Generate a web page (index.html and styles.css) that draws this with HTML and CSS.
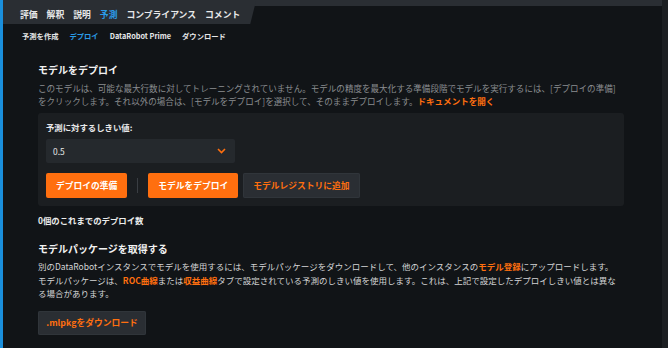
FILE: index.html
```html
<!DOCTYPE html>
<html lang="ja">
<head>
<meta charset="utf-8">
<link rel="stylesheet" href="styles.css">
</head>
<body>
<div class="app">
  <div class="rail"></div>
  <div class="main">
    <header class="topbar">
      <nav class="tabs">
        <span class="tab">評価</span>
        <span class="tab">解釈</span>
        <span class="tab">説明</span>
        <span class="tab active">予測</span>
        <span class="tab">コンプライアンス</span>
        <span class="tab">コメント</span>
      </nav>
    </header>
    <nav class="subtabs">
      <span class="subtab">予測を作成</span>
      <span class="subtab active">デプロイ</span>
      <span class="subtab">DataRobot Prime</span>
      <span class="subtab">ダウンロード</span>
    </nav>
    <section class="content">
      <h2 class="title">モデルをデプロイ</h2>
      <p class="desc">このモデルは、可能な最大行数に対してトレーニングされていません。モデルの精度を最大化する準備段階でモデルを実行するには、[デプロイの準備]<br>をクリックします。それ以外の場合は、[モデルをデプロイ]を選択して、そのままデプロイします。<a class="link">ドキュメントを開く</a></p>
      <div class="panel">
        <div class="label">予測に対するしきい値:</div>
        <div class="select">
          <span>0.5</span>
          <svg class="chev" width="9" height="6" viewBox="0 0 9 6"><polyline points="1,1 4.5,4.5 8,1" fill="none" stroke="#ff6f0f" stroke-width="1.6"/></svg>
        </div>
        <div class="actions">
          <button class="btn primary">デプロイの準備</button>
          <span class="divider"></span>
          <button class="btn primary">モデルをデプロイ</button>
          <button class="btn secondary">モデルレジストリに追加</button>
        </div>
      </div>
      <div class="count">0個のこれまでのデプロイ数</div>
      <h2 class="title pkg">モデルパッケージを取得する</h2>
      <p class="para">別のDataRobotインスタンスでモデルを使用するには、モデルパッケージをダウンロードして、他のインスタンスの<b class="hl">モデル登録</b>にアップロードします。<br>モデルパッケージは、<b class="hl">ROC曲線</b>または<b class="hl">収益曲線</b>タブで設定されている予測のしきい値を使用します。これは、上記で設定したデプロイしきい値とは異な<br>る場合があります。</p>
      <button class="btn secondary dl">.mlpkgをダウンロード</button>
    </section>
  </div>
  <div class="scrollbar"></div>
</div>
</body>
</html>
```

FILE: styles.css
```css
* { box-sizing: border-box; }
html, body { margin: 0; padding: 0; }
body {
  background: #111417;
  font-family: "Noto Sans CJK JP", "Noto Sans", sans-serif;
  color: #e6e7e8;
  width: 668px;
  height: 348px;
  overflow: hidden;
}
.app { display: flex; height: 348px; }
.rail { width: 3px; background: #1a8fdc; flex: none; }
.scrollbar { width: 6px; background: #1c1f22; flex: none; }
.main { flex: 1; min-width: 0; }

.topbar {
  height: 24px;
  background: linear-gradient(#2a2e33 0 6px, transparent 6px);
  display: flex;
}
.tabs {
  display: flex;
  gap: 9px;
  align-items: center;
  height: 24px;
  padding: 5px 16px 0 17px;
  background: #2a2e33;
  clip-path: polygon(0 0, 100% 0, calc(100% - 6px) 100%, 0 100%);
}
.tab { font-size: 8.8px; font-weight: 700; color: #e8e9ea; line-height: 12px; }
.tab.active { color: #2a9be8; }

.subtabs {
  display: flex;
  gap: 11px;
  align-items: center;
  height: 24px;
  padding: 0 0 0 19px;
}
.subtab { font-size: 7.3px; font-weight: 700; color: #e6e7e8; line-height: 12px; }
.subtab.active { color: #2a9be8; }

.content { padding: 14px 0 0 35px; width: 621px; }
.title {
  margin: 0;
  font-size: 10px;
  font-weight: 700;
  line-height: 16px;
  color: #f2f2f2;
}
.desc {
  margin: 3.5px 0 0;
  width: 600px;
  font-size: 8.55px;
  line-height: 13px;
  color: #8a8d90;
}
.link { color: #ff6f0f; font-weight: 700; }

.panel {
  margin-top: 5.5px;
  background: #1b1e21;
  border-radius: 3px;
  padding: 7.5px 8px 8px;
}
.label { font-size: 8.4px; font-weight: 700; line-height: 13px; color: #e8e9ea; }
.select {
  margin-top: 5.5px;
  width: 189px;
  height: 24px;
  background: #25292d;
  border-radius: 2px;
  display: flex;
  align-items: center;
  justify-content: space-between;
  padding: 0 9px 0 7px;
  font-size: 8.4px;
  color: #e8e9ea;
}
.actions { margin-top: 10px; display: flex; align-items: center; }
.btn {
  height: 25px;
  padding: 0 10px;
  border: none;
  border-radius: 2px;
  font-family: inherit;
  font-size: 8.75px;
  font-weight: 700;
  line-height: 25px;
  cursor: pointer;
}
.btn.primary { background: #ff6f0f; color: #fff; }
.btn.secondary { background: #2a2e33; color: #ff6f0f; box-shadow: inset 0 0 0 1px #30353a; }
.divider { width: 1px; height: 15px; background: #3a3e43; margin: 0 10px; }
.btn.secondary:not(.dl) { margin-left: 5px; }

.count {
  margin-top: 7.5px;
  font-size: 8.4px;
  font-weight: 700;
  line-height: 13px;
  color: #eceded;
}
.title.pkg { margin-top: 14.5px; }
.para {
  margin: 3px 0 0;
  width: 610px;
  font-size: 8.5px;
  line-height: 13.5px;
  color: #d4d5d6;
}
.hl { color: #ff6f0f; font-weight: 700; }
.btn.dl { margin-top: 10px; height: 24px; line-height: 24px; width: 108px; padding: 0; }
```
